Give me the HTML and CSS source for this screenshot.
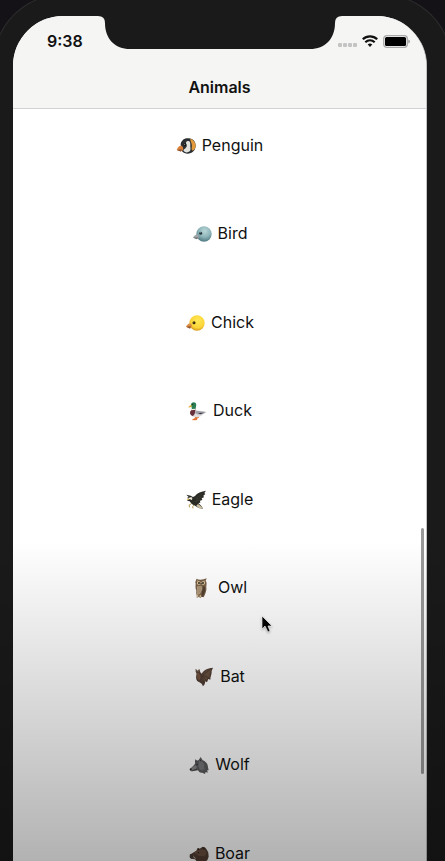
FILE: index.html
```html
<!DOCTYPE html>
<html lang="en">
<head>
  <meta charset="UTF-8">
  <meta name="viewport" content="width=device-width, initial-scale=1.0">
  <title>Animals</title>
  <link rel="stylesheet" href="styles.css">
</head>
<body>
  <div class="phone">
    <div class="screen">
      <header class="top">
        <div class="status">
          <span class="time">9:38</span>
          <div class="signals">
            <svg class="dots" width="19" height="12" viewBox="0 0 19 12" fill="#c4c4c4">
              <rect x="0" y="8" width="4" height="4" rx="1"/>
              <rect x="5" y="8" width="4" height="4" rx="1"/>
              <rect x="10" y="8" width="4" height="4" rx="1"/>
              <rect x="15" y="8" width="4" height="4" rx="1"/>
            </svg>
            <svg class="wifi" width="16" height="12" viewBox="0 0 16 12" fill="none" stroke="#111" stroke-width="2.2">
              <path d="M.8 4.300C4.800.4 11.200.4 15.200 4.300"/>
              <path d="M3.300 7.300C6 4.800 10 4.800 12.700 7.300"/>
              <path d="M8 12L5.700 9.400Q8 7.600 10.300 9.400Z" fill="#111" stroke="none"/>
            </svg>
            <svg class="battery" width="27" height="13" viewBox="0 0 27 13">
              <rect x=".7" y=".7" width="23.600" height="11.600" rx="3" fill="#f5f5f4" stroke="#a9a9a9" stroke-width="1.300"/>
              <rect x="2" y="2" width="21" height="9" rx="1.500" fill="#000"/>
              <path d="M25.300 4.500Q26.900 5 26.900 6.500T25.300 8.500Z" fill="#999"/>
            </svg>
          </div>
        </div>
        <h1 class="title">Animals</h1>
        <svg class="notch" width="244" height="33" viewBox="0 0 244 33">
          <path d="M0 0Q7 0 7 7C7 23 17 33 32 33H212C227 33 237 23 237 7Q237 0 244 0Z" fill="#1a1a1a"/>
        </svg>
      </header>

      <ul class="list">
        <li class="row">
          <svg class="emoji" viewBox="0 0 60 60">
            <path d="M14 24C17 11 27 6 38 7C52 8 60 18 59 31C58 44 48 53 35 53C24 53 16 47 15 37Z" fill="#2c2f31"/>
            <path d="M43 8C54 12 60 21 59 32C57 40 52 44 48 43C45 38 49 31 47 24C46 18 42 15 43 8Z" fill="#e39a3c"/>
            <path d="M33 16C41 13 44 20 43 28C42 35 46 41 41 46C34 52 24 49 22 42C29 37 35 32 31 25C29 21 30 18 33 16Z" fill="#e2e2df"/>
            <circle cx="27" cy="26" r="4" fill="#111"/>
            <circle cx="26" cy="25" r="1.500" fill="#ccc"/>
            <path d="M2 42C4 34 10 28 17 29C23 33 23 41 18 45Z" fill="#d9803a"/>
            <path d="M2 42L18 40L15 47Z" fill="#8a5230"/>
          </svg>
          <span>Penguin</span>
        </li>
        <li class="row">
          <svg class="emoji" viewBox="0 0 60 60">
            <defs>
              <radialGradient id="bird" cx=".55" cy=".3" r=".65">
                <stop offset="0" stop-color="#b9d6d8"/>
                <stop offset=".6" stop-color="#8db5b9"/>
                <stop offset="1" stop-color="#59828a"/>
              </radialGradient>
            </defs>
            <circle cx="36" cy="30" r="23" fill="url(#bird)"/>
            <path d="M3 41C6 35 12 30 18 32C22 36 21 42 17 45Z" fill="#a2a5a6"/>
            <path d="M3 41L18 40L15 46Z" fill="#6d7477"/>
            <circle cx="26" cy="28" r="4.500" fill="#293a40"/>
            <circle cx="25" cy="26" r="1" fill="#dbe9e9"/>
          </svg>
          <span>Bird</span>
        </li>
        <li class="row">
          <svg class="emoji" viewBox="0 0 60 60">
            <defs>
              <radialGradient id="chick" cx=".55" cy=".35" r=".65">
                <stop offset="0" stop-color="#ffe957"/>
                <stop offset=".7" stop-color="#fcd538"/>
                <stop offset="1" stop-color="#d99c1c"/>
              </radialGradient>
            </defs>
            <circle cx="36" cy="30" r="23" fill="url(#chick)"/>
            <path d="M3 41C6 35 11 30 18 32C22 36 21 42 16 46Z" fill="#d99045"/>
            <path d="M3 41L18 40L15 47Z" fill="#97552c"/>
            <circle cx="27" cy="29" r="4.500" fill="#33280c"/>
            <circle cx="26" cy="27" r="1" fill="#fff"/>
          </svg>
          <span>Chick</span>
        </li>
        <li class="row">
          <svg class="emoji" viewBox="0 0 60 60">
            <path d="M27 45L24 53L17 56H29L31 47M36 44L33 51" fill="#e46b28" stroke="#e46b28" stroke-width="3"/>
            <path d="M12 28C7 35 9 44 18 47C31 52 44 46 49 39L59 33L46 31C37 28 29 30 26 24Z" fill="#dedcdd"/>
            <path d="M13 27C6 34 9 42 17 45C25 41 24 33 26 24Z" fill="#67303a"/>
            <path d="M27 31C36 28 47 32 57 33L48 39C38 42 28 40 24 35Z" fill="#a3a1a9"/>
            <path d="M33 36L50 35L40 40Z" fill="#35323f"/>
            <path d="M12 13C11 4 21 1 26 6C30 11 26 18 26 24L14 25C16 20 12 18 12 13Z" fill="#2b7f52"/>
            <path d="M14 24L26 23V26L13 28Z" fill="#f2f2e9"/>
            <path d="M12 11C10 15 5 15 4 18C6 21 12 19 15 16Z" fill="#e1aa37"/>
            <circle cx="17" cy="10" r="2" fill="#182f25"/>
          </svg>
          <span>Duck</span>
        </li>
        <li class="row">
          <svg class="emoji" viewBox="0 0 60 60">
            <path d="M1 14L14 17L21 21L27 18C33 9 46 4 60 2L55 9L58 12L52 17L54 22L47 25L49 30L42 32L43 38L37 39L47 49L51 56L38 54L27 47L17 42L11 34L3 32L9 27L3 24L8 21Z" fill="#2b2b25"/>
            <path d="M19 23C13 20 7 23 6 28L12 28L18 30Z" fill="#f1eddf"/>
            <path d="M8 25L2 30L9 29Z" fill="#e1aa38"/>
            <path d="M36 42L47 50L51 56L38 54L31 47Z" fill="#cbbda1"/>
            <path d="M16 41L9 46L11 52M24 45L20 50L21 55" fill="none" stroke="#b49542" stroke-width="3"/>
            <path d="M29 26L49 11M30 30L47 20M28 35L42 29" stroke="#595445" stroke-width="1"/>
          </svg>
          <span>Eagle</span>
        </li>
        <li class="row">
          <svg class="emoji" viewBox="0 0 60 60">
            <path d="M13 2C20 6 32 6 44 1L41 9C46 14 43 19 43 27C45 37 40 47 35 58L29 56L26 59L20 57L14 59C16 52 11 46 13 38C9 30 11 22 11 16C8 11 13 9 13 2Z" fill="#79604a"/>
            <path d="M15 6L24 11L28 13L40 6L38 18L28 22L15 19Z" fill="#a58d6b"/>
            <circle cx="20" cy="15" r="5" fill="#e2cf9f"/>
            <circle cx="34" cy="15" r="5" fill="#e2cf9f"/>
            <circle cx="21" cy="15" r="3" fill="#30281f"/>
            <circle cx="33" cy="15" r="3" fill="#30281f"/>
            <path d="M25 15H30L27 22Z" fill="#403a32"/>
            <path d="M15 25L29 24L31 34L24 48L15 51Z" fill="#b59d7d"/>
            <path d="M35 23C43 30 39 44 31 58C27 46 31 34 35 23Z" fill="#51402f"/>
            <path d="M17 30L28 29M17 36L27 35M17 42L25 41" stroke="#806a54" stroke-width="1"/>
            <path d="M17 51V57M25 51V57" stroke="#cbb48a" stroke-width="4"/>
          </svg>
          <span>Owl</span>
        </li>
        <li class="row">
          <svg class="emoji" viewBox="0 0 60 60">
            <path d="M5 6L11 11L16 6L19 16L23 20C31 7 43 3 57 2L53 12C54 22 49 28 49 38L43 36L39 46L34 43L32 52L27 58L23 50L15 45C5 41 5 29 8 20L5 14Z" fill="#4f3d34"/>
            <path d="M26 22C34 10 43 6 53 5L49 15C46 22 47 29 46 34L41 32L38 41L33 38L29 47L24 37Z" fill="#67503e"/>
            <path d="M27 24L52 5M27 25L45 33M26 26L38 42M25 27L29 48" stroke="#3c2f2a" stroke-width="2" fill="none"/>
            <path d="M8 17L15 17L20 29L17 40L10 35Z" fill="#72513c"/>
            <path d="M6 7L10 15M15 8L14 15" stroke="#91705a" stroke-width="2"/>
          </svg>
          <span>Bat</span>
        </li>
        <li class="row">
          <svg class="emoji" viewBox="0 0 60 60">
            <path d="M2 42C7 37 14 33 18 26C20 20 24 16 29 15L35 6L41 16C50 19 57 27 57 37L59 46L55 45L56 53L50 51L48 57L40 53C34 55 29 50 27 46L10 49C5 49 2 46 2 42Z" fill="#595a5c"/>
            <path d="M4 42C9 37 16 33 20 31L24 38L19 44L9 47Z" fill="#858586"/>
            <path d="M30 18L35 9L39 20C46 25 47 31 45 37L48 45L40 42L41 49L32 43L28 34Z" fill="#757678"/>
            <path d="M18 25L19 13L25 18ZM32 17L35 11L37 20Z" fill="#3b3b3e"/>
            <circle cx="24" cy="28" r="2" fill="#202022"/>
            <path d="M2 42L7 40L9 43L5 46Z" fill="#252526"/>
            <path d="M10 47L24 42" stroke="#2d2d2e" stroke-width="2"/>
          </svg>
          <span>Wolf</span>
        </li>
        <li class="row">
          <svg class="emoji" viewBox="0 0 60 60">
            <path d="M2 32L12 26L22 20L26 12L32 14L41 8L49 11L54 18L58 26L59 38L55 49L42 56L24 53L18 46L6 44Z" fill="#503c32"/>
            <path d="M14 26L28 18L46 15L53 27L47 37L30 36Z" fill="#684e3f"/>
            <ellipse cx="7" cy="37" rx="5" ry="7" fill="#463a36"/>
            <path d="M18 41L13 36L12 30C12 41 17 45 22 43Z" fill="#d7ccb9"/>
            <circle cx="28" cy="26" r="2" fill="#1c1714"/>
            <path d="M26 12L32 15L29 20ZM42 9L49 12L44 19Z" fill="#35281f"/>
          </svg>
          <span>Boar</span>
        </li>
      </ul>
      <div class="scrollbar"></div>
    </div>
  </div>

  <div class="shade"></div>
  <svg class="cursor" width="14" height="21" viewBox="0 0 14 21">
    <path d="M2 2V15L5 12L8 18L10 17L8 12H12Z" fill="#000" stroke="#fff" stroke-opacity=".6" stroke-width="1"/>
  </svg>
</body>
</html>
```
FILE: styles.css
```css
* {
  box-sizing: border-box;
}
body {
  margin: 0;
  height: 100vh;
  overflow: hidden;
  position: relative;
  background: #141216;
  font-family: Inter, "Liberation Sans", sans-serif;
  font-size: 16px;
  line-height: 24px;
  color: #111;
}

/* phone body, slightly wider than the window */
.phone {
  height: calc(100vh + 6px);
  margin: -6px -7px 0;
  padding: 21px 24px 0 19px;
  background: #1a1a1a;
  border: 1px solid #2c2c2c;
  border-width: 1px 1px 0;
  border-radius: 70px 70px 0 0;
}
.screen {
  display: flex;
  flex-direction: column;
  height: 100%;
  position: relative;
  overflow: hidden;
  background: #fff;
  border-right: 1px solid #c4c4c4;
  border-radius: 50px 50px 0 0;
}

.top {
  flex: none;
  position: relative;
  background: #f5f5f4;
  border-bottom: 1px solid #d2d2d2;
}
.status {
  display: flex;
  justify-content: space-between;
  align-items: center;
  height: 50px;
  padding: 0 16px 0 34px;
}
.time {
  font-weight: 600;
}
.signals {
  display: flex;
  align-items: center;
  gap: 5px;
}
.title {
  height: 42px;
  margin: 0;
  padding-top: 9px;
  font-size: 16px;
  line-height: 24px;
  font-weight: 600;
  text-align: center;
}
.notch {
  position: absolute;
  top: 0;
  left: 50%;
  transform: translateX(-50%);
}

/* eight and a half rows fit, the last one is cut */
.list {
  flex: 1;
  min-height: 0;
  margin: 0;
  padding: 0;
  list-style: none;
  display: grid;
  grid-auto-rows: calc(100% / 8.5);
}
.row {
  display: flex;
  justify-content: center;
  align-items: flex-start;
  gap: 6px;
  padding-top: 24px;
}
.emoji {
  width: 20px;
  height: 20px;
  margin-top: 3px;
}

.scrollbar {
  position: absolute;
  right: 2px;
  bottom: 87px;
  width: 3px;
  height: 246px;
  border-radius: 2px;
  background: #999;
}
.shade {
  position: absolute;
  left: 0;
  right: 0;
  bottom: 0;
  height: 320px;
  background: linear-gradient(rgba(0, 0, 0, 0), rgba(0, 0, 0, .3));
  pointer-events: none;
}
.cursor {
  position: absolute;
  left: 260px;
  top: 614px;
  filter: drop-shadow(0 1px 1px rgba(0, 0, 0, .3));
}
```
